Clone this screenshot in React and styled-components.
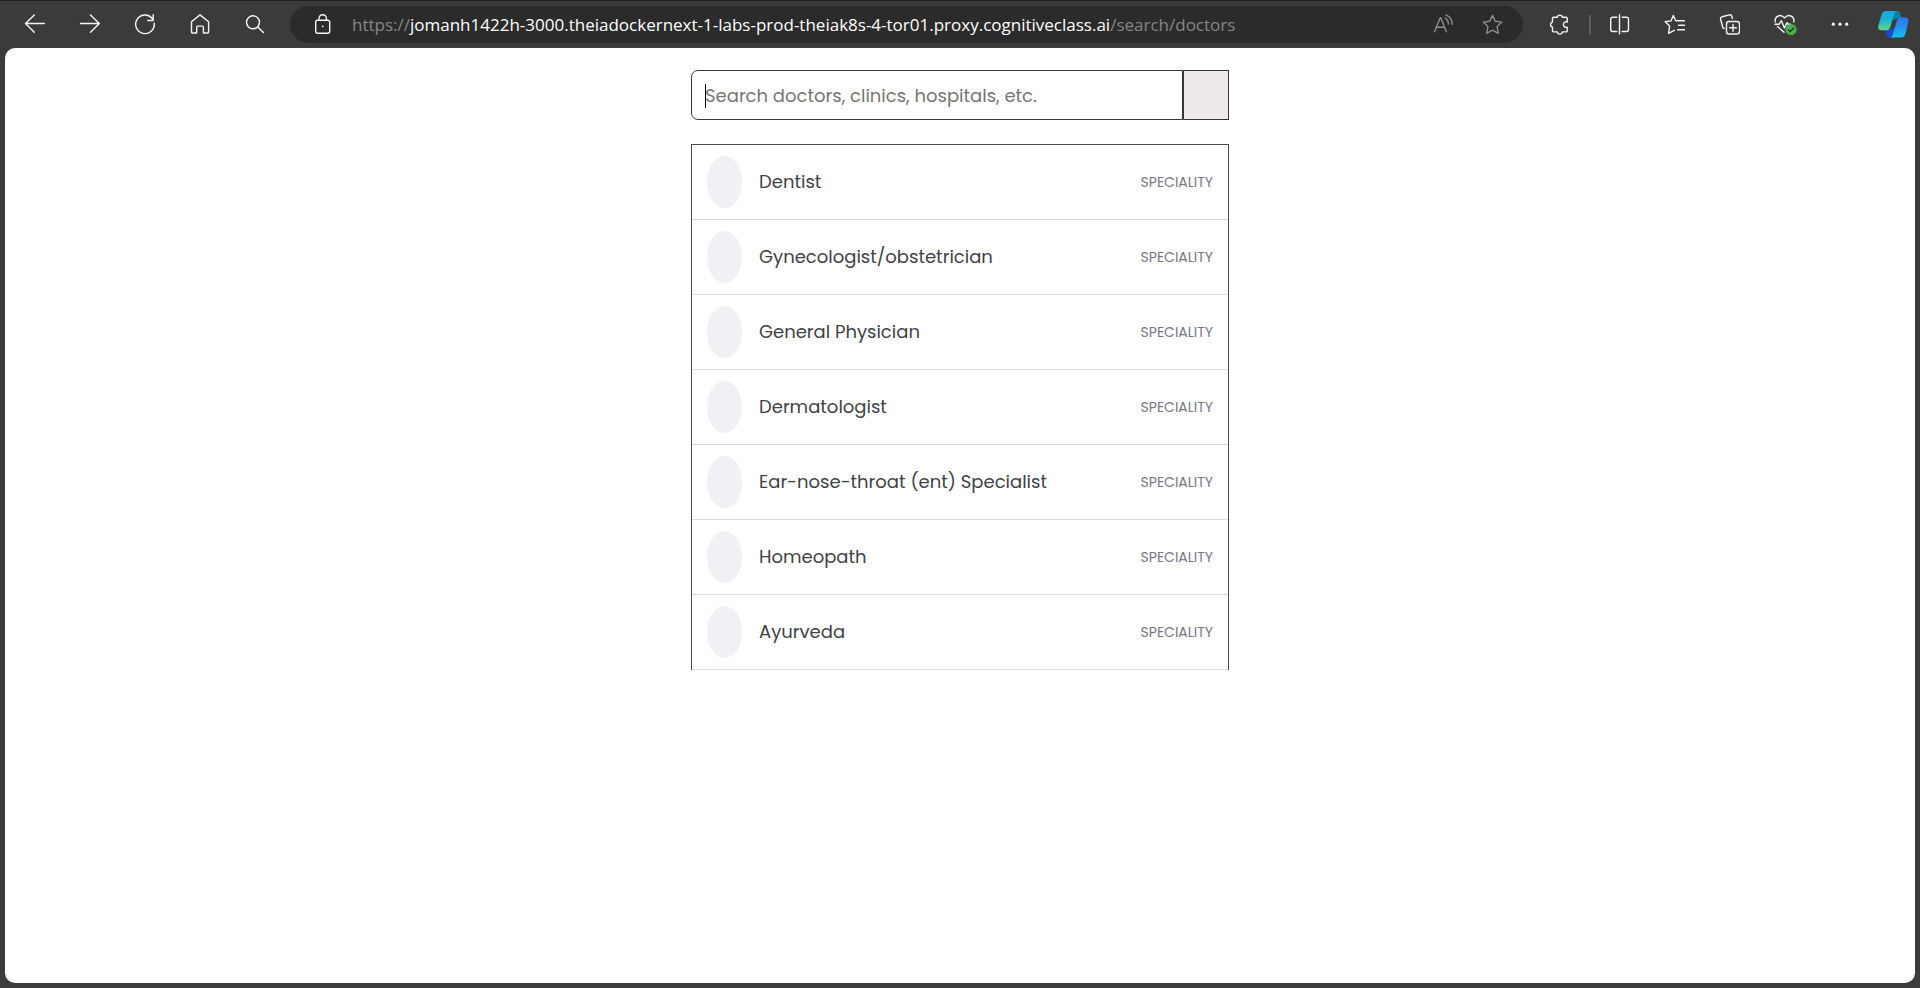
import React from "react";
import styled, { createGlobalStyle } from "styled-components";

const GlobalStyle = createGlobalStyle`
  *, *::before, *::after { box-sizing: border-box; }
  body {
    margin: 0;
    background: #3b3b3b;
    font-family: Poppins, Inter, sans-serif;
  }
  button, input { font: inherit; }
`;

const Shell = styled.div`
  display: flex;
  flex-direction: column;
  min-height: 100vh;
`;

const Toolbar = styled.header`
  display: flex;
  align-items: stretch;
  height: 48px;
  padding: 5px 0;
  border-top: 1px solid #202020;
  background: #3b3b3b;
`;

const ButtonGroup = styled.nav`
  display: flex;
  padding: ${(p) => (p.$start ? "0 8px 0 7px" : "0 0 0 9px")};
`;

const ToolButton = styled.button`
  display: flex;
  align-items: center;
  justify-content: center;
  flex: none;
  width: ${(p) => p.$width || 55}px;
  padding: 0;
  border: 0;
  background: transparent;
  color: ${(p) => (p.$muted ? "#8c8c8c" : "#f4f4f4")};
`;

const Divider = styled.span`
  align-self: center;
  width: 2px;
  height: 20px;
  margin: 0 1px 0 2px;
  background: #5e5e5e;
`;

const AddressBar = styled.div`
  display: flex;
  flex: 1;
  min-width: 0;
  padding: 0 6px 0 8px;
  border-radius: 19px;
  background: #2b2b2b;
`;

const Address = styled.div`
  flex: 1;
  min-width: 0;
  padding-left: 5px;
  overflow: hidden;
  outline: 0;
  color: #868686;
  font-family: "Segoe UI", "Open Sans", sans-serif;
  font-size: 17px;
  line-height: 37px;
  white-space: nowrap;
`;

const Host = styled.span`
  color: #ffffff;
`;

const Page = styled.main`
  flex: 1;
  margin: 0 5px 5px;
  padding: 22px 16px;
  border-radius: 10px;
  background: #ffffff;
`;

const Finder = styled.div`
  display: flex;
  flex-direction: column;
  gap: 24px;
  max-width: 538px;
  margin: 0 auto;
`;

const SearchForm = styled.form`
  display: flex;
  height: 50px;
`;

const SearchField = styled.label`
  position: relative;
  display: flex;
  flex: 1;
  min-width: 0;
`;

const SearchInput = styled.input`
  width: 100%;
  padding: 0 13px;
  border: 1px solid #37373a;
  border-radius: 7px 0 0 7px;
  outline: 0;
  background: #ffffff;
  color: #414146;
  font-size: 18px;
  &::placeholder { color: #757575; opacity: 1; }
`;

const Caret = styled.span`
  position: absolute;
  top: 14px;
  left: 14px;
  width: 1px;
  height: 24px;
  background: #000000;
  pointer-events: none;
`;

const SearchButton = styled.button`
  flex: none;
  width: 46px;
  border: 1px solid #37373a;
  border-left-width: 1px;
  border-radius: 0;
  background: #eee9e8;
`;

const Results = styled.ul`
  margin: 0;
  padding: 0;
  border: 1px solid #4b4b50;
  border-bottom: 0;
  list-style: none;
`;

const Result = styled.li`
  display: flex;
  align-items: center;
  gap: 17px;
  height: 75px;
  padding: 0 15px;
  border-bottom: 1px solid #dcdce0;
`;

const Avatar = styled.span`
  flex: none;
  width: 35px;
  height: 52px;
  border-radius: 50%;
  background: #f0f0f5;
`;

const ResultName = styled.span`
  flex: 1;
  color: #414146;
  font-size: 18px;
  line-height: 24px;
`;

const ResultKind = styled.span`
  color: #787887;
  font-size: 14px;
  line-height: 20px;
`;

const Icon = ({ children }) => (
  <svg width="21" height="21" viewBox="0 0 21 21" fill="none" stroke="currentColor"
    strokeWidth="1.4" strokeLinecap="round" strokeLinejoin="round" aria-hidden="true">
    {children}
  </svg>
);

const BackIcon = () => <Icon><path d="M20.3 9.5H1.5M10.3 1L1.5 9.5l8.8 8.8" /></Icon>;
const ForwardIcon = () => <Icon><path d="M1.5 9.5h18.8M11.5 1l8.8 8.5-8.8 8.8" /></Icon>;
const ReloadIcon = () => <Icon><path d="M20.2 9.2A9.3 9.3 0 1 1 18 4.2l1 1.6M19.2.8v5.7h-5.5" /></Icon>;
const HomeIcon = () => (
  <Icon><path d="M11 .9 19.6 7.7V18a1 1 0 0 1-1 1h-4.2v-5.9a1 1 0 0 0-1-1H8.7a1 1 0 0 0-1 1V19H3.5a1 1 0 0 1-1-1V7.7z" /></Icon>
);
const FindIcon = () => <Icon><circle cx="9" cy="8.3" r="6.5" /><path d="m13.8 13 5.6 5.5" /></Icon>;
const LockIcon = () => (
  <Icon>
    <rect x="3.7" y="6.2" width="14" height="13" rx="2" />
    <path d="M7 6V4.4a3.7 3.7 0 0 1 7.4 0V6" />
    <circle cx="10.7" cy="12.4" r=".9" fill="currentColor" stroke="none" />
  </Icon>
);
const ReadAloudIcon = () => (
  <Icon><path d="M1.5 17.8 7.2 3.8h.5l5.7 14M3.5 13.3h7.8M12.2 4.2c2.1 1.2 3.2 3.2 3.2 5.9M13 .9c4 1.8 6.2 4.9 6.2 9.4" /></Icon>
);
const StarIcon = () => (
  <Icon><path d="m10.5 1.4 2.8 5.8 6.5.9-4.7 4.5 1.2 6.7-5.8-3.1-5.8 3.1 1.2-6.7L1.2 8.1l6.5-.9z" /></Icon>
);
const PuzzleIcon = () => (
  <Icon><path d="M4.5 3.3h3.7a2.7 2.7 0 0 1 5.3 0h3.7a1 1 0 0 1 1 1v3.7a2.8 2.8 0 1 0 0 5.2v3.7a1 1 0 0 1-1 1h-3.7a2.7 2.7 0 0 1-5.3 0H4.5a1 1 0 0 1-1-1v-3.7a2.7 2.7 0 0 1 0-5.2V4.3a1 1 0 0 1 1-1z" /></Icon>
);
const SplitIcon = () => (
  <Icon><path d="M10.5.8v19M7.8 3.2H3.7a2 2 0 0 0-2 2v10.3a2 2 0 0 0 2 2h4.1M13.2 3.2h4.3a2 2 0 0 1 2 2v10.3a2 2 0 0 1-2 2h-4.3" /></Icon>
);
const FavoritesIcon = () => (
  <Icon><path d="M13.5 6.8h7M14.5 11.3h6M13.5 15.8h7M13.5 6.8h-1.7L9.3 1.5 7 6.9l-5.8.8 4.4 4.4-1 7.3 5.7-3" /></Icon>
);
const CollectionsIcon = () => (
  <Icon>
    <rect x="7.5" y="7.5" width="13" height="12.5" rx="2.5" />
    <path d="M14 10.5v6.7M10.7 13.8h6.7M5.2 14.5a2 2 0 0 1-1.5-1.5L1.6 5.2a2 2 0 0 1 1.4-2.4L10.5.9a2 2 0 0 1 2.4 1.4l.5 2" />
  </Icon>
);
const EssentialsIcon = () => (
  <svg width="25" height="23" viewBox="0 0 25 23" fill="none" stroke="currentColor"
    strokeWidth="1.4" strokeLinecap="round" strokeLinejoin="round" aria-hidden="true">
    <path d="M3.3 8.8C2.2 3.5 8.3.2 12.5 4.9 16.7.2 22.9 3.4 21.8 8.8M3 11.2h4.2l2.2-3.5 3 7.3 2.5-5.3 1 1.5h2.5M5.5 13.5l6.5 5.7" />
    <circle cx="19" cy="16.5" r="5.6" fill="#4caf50" stroke="none" />
    <path d="m16.5 16.7 1.7 1.8 3.5-3.5" stroke="#26342a" />
  </svg>
);
const MoreIcon = () => (
  <Icon>
    <g fill="currentColor" stroke="none">
      <circle cx="4.3" cy="10.2" r="1.6" /><circle cx="11" cy="10.2" r="1.6" /><circle cx="17.7" cy="10.2" r="1.6" />
    </g>
  </Icon>
);
const CopilotIcon = () => (
  <svg width="31" height="27" viewBox="0 0 31 27" aria-hidden="true">
    <defs>
      <linearGradient id="copilotLeft" x1="0" y1="0" x2="0" y2="1">
        <stop offset="0" stopColor="#19a4e8" /><stop offset=".45" stopColor="#15b5cf" /><stop offset="1" stopColor="#62d58b" />
      </linearGradient>
      <linearGradient id="copilotRight" x1="0" y1="0" x2="0" y2="1">
        <stop offset="0" stopColor="#2c78e8" /><stop offset=".5" stopColor="#2491f0" /><stop offset="1" stopColor="#15c0ee" />
      </linearGradient>
    </defs>
    <path d="M15 0h4.5c1.8 0 2.5 1.2 3.1 3.2L23.6 6.6 15 9z" fill="#087f9f" />
    <path d="M7 18.5h5l4-2-1 10h-3c-2.2 0-3-1.2-3.6-3z" fill="#1b48d8" />
    <path d="M7.8 0h11c-1.5.4-2.1 1.5-2.6 3.2l-4 13c-.7 2-1.7 3-3.6 3H3.3c-2.8 0-3.7-2-2.9-4.7L3.4 4C4.2 1.5 5.3 0 7.8 0z" fill="url(#copilotLeft)" />
    <path d="M23.2 26.5H12c1.7-.4 2.3-1.5 2.8-3.3l4-13.2c.7-2.3 1.8-3.5 3.9-3.5h4.6c2.8 0 3.7 2 2.9 4.7L27.6 22.5c-.8 2.5-2 4-4.4 4z" fill="url(#copilotRight)" />
  </svg>
);

const navigation = [
  ["Back", BackIcon],
  ["Forward", ForwardIcon],
  ["Refresh", ReloadIcon],
  ["Home", HomeIcon],
  ["Search the page", FindIcon],
];

const tools = [
  ["Split screen", SplitIcon],
  ["Favorites", FavoritesIcon],
  ["Collections", CollectionsIcon],
  ["Browser essentials", EssentialsIcon],
  ["Settings and more", MoreIcon],
];

const specialities = [
  "Dentist",
  "Gynecologist/obstetrician",
  "General Physician",
  "Dermatologist",
  "Ear-nose-throat (ent) Specialist",
  "Homeopath",
  "Ayurveda",
];

export default function App() {
  return (
    <>
      <GlobalStyle />
      <Shell>
        <Toolbar>
          <ButtonGroup $start aria-label="Navigation">
            {navigation.map(([label, Glyph]) => (
              <ToolButton key={label} type="button" aria-label={label}><Glyph /></ToolButton>
            ))}
          </ButtonGroup>
          <AddressBar>
            <ToolButton type="button" $width={49} aria-label="Site information"><LockIcon /></ToolButton>
            <Address role="textbox" aria-label="Address" contentEditable suppressContentEditableWarning spellCheck={false}>
              https://<Host>jomanh1422h-3000.theiadockernext-1-labs-prod-theiak8s-4-tor01.proxy.cognitiveclass.ai</Host>/search/doctors
            </Address>
            <ToolButton type="button" $width={49} $muted aria-label="Read aloud"><ReadAloudIcon /></ToolButton>
            <ToolButton type="button" $width={49} $muted aria-label="Add to favorites"><StarIcon /></ToolButton>
          </AddressBar>
          <ButtonGroup aria-label="Browser tools">
            <ToolButton type="button" aria-label="Extensions"><PuzzleIcon /></ToolButton>
            <Divider />
            {tools.map(([label, Glyph]) => (
              <ToolButton key={label} type="button" aria-label={label}><Glyph /></ToolButton>
            ))}
            <ToolButton type="button" $width={53} aria-label="Copilot"><CopilotIcon /></ToolButton>
          </ButtonGroup>
        </Toolbar>
        <Page>
          <Finder>
            <SearchForm onSubmit={(event) => event.preventDefault()}>
              <SearchField>
                <SearchInput
                  type="text"
                  aria-label="Search doctors, clinics, hospitals, etc."
                  placeholder="Search doctors, clinics, hospitals, etc."
                />
                <Caret />
              </SearchField>
              <SearchButton type="submit" aria-label="Search" />
            </SearchForm>
            <Results>
              {specialities.map((name) => (
                <Result key={name}>
                  <Avatar />
                  <ResultName>{name}</ResultName>
                  <ResultKind>SPECIALITY</ResultKind>
                </Result>
              ))}
            </Results>
          </Finder>
        </Page>
      </Shell>
    </>
  );
}
